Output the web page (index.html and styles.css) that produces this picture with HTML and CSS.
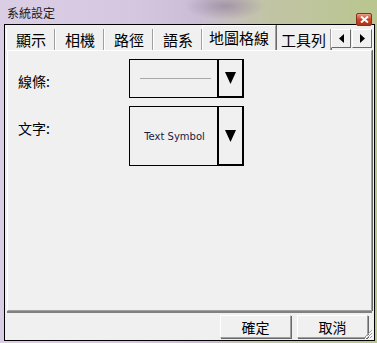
FILE: index.html
```html
<!DOCTYPE html>
<html lang="zh-Hant">
<head>
  <meta charset="UTF-8" />
  <title>系統設定</title>
  <link rel="stylesheet" href="styles.css">
</head>
<body>
  <div class="titlebar">
    <span class="title">系統設定</span>
    <span class="close">
      <svg width="9" height="7" viewBox="0 0 9 7"><path d="M1 0.5 L8 6.5 M8 0.5 L1 6.5" stroke="#fff" stroke-width="2"/></svg>
    </span>
  </div>

  <div class="window">
    <div class="tabs">
      <div class="tab">顯示</div>
      <div class="tab">相機</div>
      <div class="tab">路徑</div>
      <div class="tab">語系</div>
      <div class="tab active">地圖格線</div>
      <div class="tab last">工具列</div>
      <div class="scroller">
        <span class="arrow"><svg width="5" height="9" viewBox="0 0 5 9"><path d="M5 0 L0 4.5 L5 9 Z"/></svg></span>
        <span class="arrow"><svg width="5" height="9" viewBox="0 0 5 9"><path d="M0 0 L5 4.5 L0 9 Z"/></svg></span>
      </div>
    </div>

    <div class="panel">
      <div class="row">
        <label>線條:</label>
        <div class="combo short">
          <div class="value"><span class="line"></span></div>
          <div class="drop"><svg width="11" height="12" viewBox="0 0 11 12"><path d="M0 0 H11 L5.5 12 Z"/></svg></div>
        </div>
      </div>
      <div class="row">
        <label>文字:</label>
        <div class="combo tall">
          <div class="value"><span class="symbol">Text Symbol</span></div>
          <div class="drop"><svg width="11" height="12" viewBox="0 0 11 12"><path d="M0 0 H11 L5.5 12 Z"/></svg></div>
        </div>
      </div>
    </div>

    <div class="footer">
      <button>確定</button>
      <button>取消</button>
      <svg class="grip" width="10" height="10" viewBox="0 0 10 10">
        <path d="M9 1 L1 9 M9 4 L4 9 M9 7 L7 9" stroke="#a0a0a0" stroke-width="1"/>
        <path d="M10 2 L2 10 M10 5 L5 10 M10 8 L8 10" stroke="#fff" stroke-width="1"/>
      </svg>
    </div>
  </div>
</body>
</html>
```

FILE: styles.css
```css
html, body {
  margin: 0;
  padding: 0;
  height: 343px;
  overflow: hidden;
}

body {
  font-family: "Noto Sans CJK TC", sans-serif;
  color: #000;
  background:
    radial-gradient(ellipse 40px 14px at 225px 6px, rgba(140, 120, 150, 0.6), rgba(140, 120, 150, 0)),
    linear-gradient(90deg, #dacee4 0%, #d6c7e1 35%, #cbbdd6 52%, #c2c4a6 70%, #b9c68f 100%);
  padding: 0 2px 0 4px;
  box-sizing: border-box;
}

.titlebar {
  height: 24px;
  display: flex;
  align-items: flex-start;
  justify-content: space-between;
}

.title {
  font-size: 12px;
  line-height: 12px;
  margin: 7px 0 0 3px;
  color: #1a1a1a;
}

.close {
  width: 14px;
  height: 11px;
  margin: 13px 3px 0 0;
  background: linear-gradient(to bottom, #e8a088, #c8452a 50%, #b03418);
  border: 1px solid #8a3020;
  border-radius: 2px;
  display: flex;
  align-items: center;
  justify-content: center;
}

.window {
  border: 1px solid #000;
  background: #f0f0f0;
  height: 315px;
  display: flex;
  flex-direction: column;
}

/* 分頁列 */
.tabs {
  display: flex;
  align-items: flex-end;
  height: 25px;
  padding-left: 1px;
  font-size: 15px;
}

.tab {
  height: 21px;
  line-height: 21px;
  padding: 0 8px 0 9px;
  border-left: 1px solid #fff;
  border-right: 1px solid #a0a0a0;
  box-shadow: 1px 0 0 #696969;
  white-space: nowrap;
}

.tab.active {
  height: 25px;
  line-height: 24px;
  padding: 0 6px;
  border-top: 1px solid #fff;
  box-sizing: border-box;
  position: relative;
  z-index: 1;
}

.tab.last {
  padding: 0 4px;
  width: 45px;
  overflow: hidden;
}

.scroller {
  display: flex;
  gap: 1px;
  margin: 0 2px 2px auto;
}

.arrow {
  width: 18px;
  height: 17px;
  display: flex;
  align-items: center;
  justify-content: center;
  border-top: 1px solid #fff;
  border-left: 1px solid #fff;
  border-right: 1px solid #696969;
  border-bottom: 1px solid #696969;
}

/* 內容面板 */
.panel {
  flex: 1;
  margin: 0 2px 0 2px;
  border-top: 1px solid #fff;
  border-left: 1px solid #fff;
  border-right: 1px solid #a0a0a0;
  box-shadow: 1px 0 0 #696969, 0 2px 0 #808080;
  border-bottom: 1px solid #a0a0a0;
  padding: 8px 0 0 10px;
  display: flex;
  flex-direction: column;
  gap: 8px;
}

.row {
  display: flex;
  align-items: flex-start;
}

.row label {
  width: 111px;
  font-size: 14px;
  line-height: 20px;
  margin-top: 12px;
}

.combo {
  width: 115px;
  border: 1px solid #000;
  box-sizing: border-box;
  display: flex;
}

.combo.short { height: 39px; }
.combo.tall { height: 60px; }

.value {
  flex: 1;
  display: flex;
  align-items: center;
  justify-content: center;
}

.line {
  width: 71px;
  height: 1px;
  background: #a8a8a8;
  margin-left: 3px;
}

.symbol {
  font-family: "DejaVu Sans", sans-serif;
  font-size: 10px;
  color: #1b1b3a;
  margin-left: 2px;
}

.drop {
  width: 26px;
  border-left: 2px solid #000;
  border-right: 1px solid #000;
  border-bottom: 1px solid #000;
  box-sizing: border-box;
  display: flex;
  align-items: center;
  justify-content: center;
}

/* 底部按鈕 */
.footer {
  height: 29px;
  display: flex;
  align-items: center;
  justify-content: flex-end;
  gap: 6px;
  padding: 0 6px 0 0;
  position: relative;
}

.footer button {
  width: 71px;
  height: 23px;
  margin-top: 2px;
  background: #f0f0f0;
  font-family: "Noto Sans CJK TC", sans-serif;
  font-size: 14px;
  padding: 0;
  border-top: 1px solid #fff;
  border-left: 1px solid #fff;
  border-right: 1px solid #a0a0a0;
  border-bottom: 1px solid #a0a0a0;
  box-shadow: 1px 1px 0 #696969;
}

.grip {
  position: absolute;
  right: 1px;
  bottom: 1px;
}
```
